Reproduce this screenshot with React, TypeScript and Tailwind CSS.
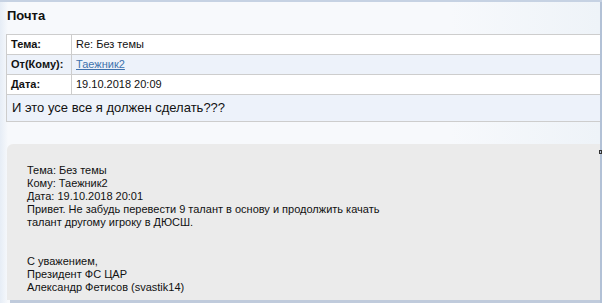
import React from "react";

const font = { fontFamily: '"Liberation Sans", Arial, sans-serif' };

function Row({ label, children, alt }: { label: string; children: React.ReactNode; alt?: boolean }) {
  return (
    <div className={`flex h-[20px] border-t border-[#cdcdcd] ${alt ? "bg-[#edf2fa]" : "bg-white"}`}>
      <div className="w-[65px] border-l border-[#cdcdcd] pl-[4px] flex items-center text-[11px] font-bold text-[#111]">
        {label}
      </div>
      <div className="flex-1 border-l border-[#cdcdcd] pl-[4px] flex items-center text-[11px] text-[#111]">
        {children}
      </div>
    </div>
  );
}

export default function App() {
  return (
    <div
      className="relative w-[602px] h-[303px] overflow-hidden bg-[#f7f9fc] border-t-2 border-[#c6d2e3]"
      style={font}
    >
      <div className="absolute inset-y-0 left-0 w-[8px] bg-gradient-to-r from-[#e6edf6] to-transparent" />
      <div className="absolute top-0 bottom-0 right-[2px] w-[150px] bg-gradient-to-r from-transparent to-[#eef3f8]" />
      <div className="relative flex flex-col h-full pr-[2px]">
        <div className="h-[32px] pl-[7px] pt-[4px] text-[13px] font-bold text-[#111]">Почта</div>
        <div className="ml-[6px] flex flex-col border-b border-[#cdcdcd]">
          <Row label="Тема:">Re: Без темы</Row>
          <Row label="От(Кому):" alt>
            <span className="underline text-[#3f72ad]">Таежник2</span>
          </Row>
          <Row label="Дата:">19.10.2018 20:09</Row>
          <div className="h-[27px] border-t border-l border-[#cdcdcd] bg-[#edf2fa] pl-[5px] flex items-center text-[13px] text-[#111]">
            И это усе все я должен сделать???
          </div>
        </div>
        <div className="h-[22px]" />
        <div className="ml-[7px] flex-1 bg-[#ebebeb] rounded-tl-[6px] pl-[20px] pt-[20px] text-[11px] leading-[13px] text-[#111]">
          <div>Тема: Без темы</div>
          <div>Кому: Таежник2</div>
          <div>Дата: 19.10.2018 20:01</div>
          <div>Привет. Не забудь перевести 9 талант в основу и продолжить качать</div>
          <div>талант другому игроку в ДЮСШ.</div>
          <div className="h-[13px]" />
          <div className="h-[13px]" />
          <div>С уважением,</div>
          <div>Президент ФС ЦАР</div>
          <div>Александр Фетисов (svastik14)</div>
        </div>
        <div className="h-[3px] ml-[10px] bg-[#c0cbdc]" />
      </div>
      <div className="absolute top-0 bottom-0 right-0 w-[2px] bg-[#b2c1d6]" />
      <div className="absolute right-0 top-[148px] w-[3px] h-[4px] border border-[#333]" />
    </div>
  );
}
